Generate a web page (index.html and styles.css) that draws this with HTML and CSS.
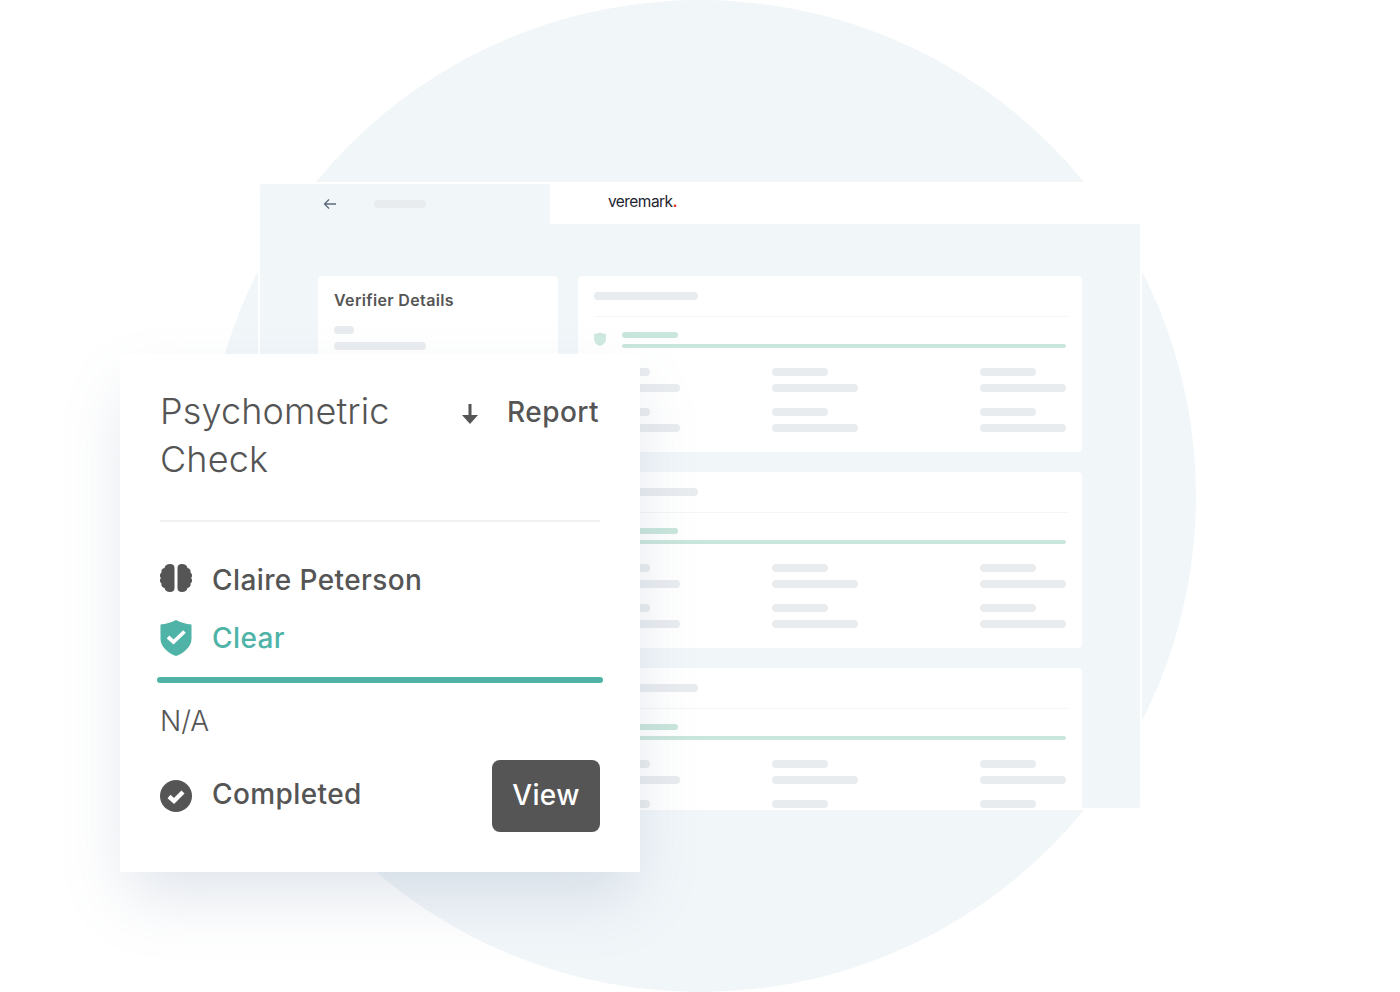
FILE: index.html
```html
<!DOCTYPE html>
<html lang="en">
<head>
  <meta charset="UTF-8" />
  <meta name="viewport" content="width=device-width, initial-scale=1.0" />
  <title>Psychometric Check</title>
  <link rel="stylesheet" href="styles.css">
</head>
<body>
  <div class="stage">
    <div class="circle"></div>

    <div class="dashboard">
      <div class="topbar">
        <div class="topbar-left">
          <svg class="back-arrow" width="14" height="12" viewBox="0 0 14 12" fill="none" stroke="#5b6b7b" stroke-width="1.3">
            <path d="M13 6H1.5M6 1.5L1.5 6L6 10.500" />
          </svg>
          <span class="bar bar-title"></span>
        </div>
        <div class="topbar-right">
          <span class="logo">veremark<span class="logo-dot">.</span></span>
        </div>
      </div>

      <div class="dash-main">
        <div class="side-card">
          <div class="side-title">Verifier Details</div>
          <span class="bar bar-tiny"></span>
          <span class="bar bar-mid"></span>
        </div>

        <div class="check-list">
          <div class="check-card">
            <span class="bar bar-head"></span>
            <div class="check-line"></div>
            <div class="check-status">
              <svg class="mini-shield" width="12" height="14" viewBox="0 0 12 14"><path d="M6 0.500C8 1.500 10 1.800 12 1.800V7C12 10.500 9 13 6 14C3 13 0 10.500 0 7V1.800C2 1.800 4 1.500 6 0.500Z" fill="#cfe9e0" /></svg>
              <div class="status-bars">
                <span class="bar-green bar-green-short"></span>
                <span class="bar-green bar-green-long"></span>
              </div>
            </div>
            <div class="field-grid">
              <div class="field"><span class="bar bar-short"></span><span class="bar bar-long"></span></div>
              <div class="field"><span class="bar bar-short"></span><span class="bar bar-long"></span></div>
              <div class="field"><span class="bar bar-short"></span><span class="bar bar-long"></span></div>
              <div class="field"><span class="bar bar-short"></span><span class="bar bar-long"></span></div>
              <div class="field"><span class="bar bar-short"></span><span class="bar bar-long"></span></div>
              <div class="field"><span class="bar bar-short"></span><span class="bar bar-long"></span></div>
            </div>
          </div>

          <div class="check-card">
            <span class="bar bar-head"></span>
            <div class="check-line"></div>
            <div class="check-status">
              <svg class="mini-shield" width="12" height="14" viewBox="0 0 12 14"><path d="M6 0.500C8 1.500 10 1.800 12 1.800V7C12 10.500 9 13 6 14C3 13 0 10.500 0 7V1.800C2 1.800 4 1.500 6 0.500Z" fill="#cfe9e0" /></svg>
              <div class="status-bars">
                <span class="bar-green bar-green-short"></span>
                <span class="bar-green bar-green-long"></span>
              </div>
            </div>
            <div class="field-grid">
              <div class="field"><span class="bar bar-short"></span><span class="bar bar-long"></span></div>
              <div class="field"><span class="bar bar-short"></span><span class="bar bar-long"></span></div>
              <div class="field"><span class="bar bar-short"></span><span class="bar bar-long"></span></div>
              <div class="field"><span class="bar bar-short"></span><span class="bar bar-long"></span></div>
              <div class="field"><span class="bar bar-short"></span><span class="bar bar-long"></span></div>
              <div class="field"><span class="bar bar-short"></span><span class="bar bar-long"></span></div>
            </div>
          </div>

          <div class="check-card check-card-cut">
            <span class="bar bar-head"></span>
            <div class="check-line"></div>
            <div class="check-status">
              <svg class="mini-shield" width="12" height="14" viewBox="0 0 12 14"><path d="M6 0.500C8 1.500 10 1.800 12 1.800V7C12 10.500 9 13 6 14C3 13 0 10.500 0 7V1.800C2 1.800 4 1.500 6 0.500Z" fill="#cfe9e0" /></svg>
              <div class="status-bars">
                <span class="bar-green bar-green-short"></span>
                <span class="bar-green bar-green-long"></span>
              </div>
            </div>
            <div class="field-grid">
              <div class="field"><span class="bar bar-short"></span><span class="bar bar-long"></span></div>
              <div class="field"><span class="bar bar-short"></span><span class="bar bar-long"></span></div>
              <div class="field"><span class="bar bar-short"></span><span class="bar bar-long"></span></div>
              <div class="field"><span class="bar bar-short"></span></div>
              <div class="field"><span class="bar bar-short"></span></div>
              <div class="field"><span class="bar bar-short"></span></div>
            </div>
          </div>
        </div>
      </div>
    </div>

    <div class="result-card">
      <div class="result-head">
        <h1 class="result-title">Psychometric Check</h1>
        <div class="report-link">
          <svg width="16" height="20" viewBox="0 0 16 20" fill="#555"><path d="M6.500 0H9.500V11H16L8 20L0 11H6.500Z" /></svg>
          <span>Report</span>
        </div>
      </div>

      <div class="result-row row-name">
        <svg class="row-icon" width="32" height="28" viewBox="0 0 32 28" fill="#555">
          <path d="M10 0C13 0 14.500 1.500 14.500 4V24C14.500 26.500 13 28 10 28C7 28 5 26.500 4.500 24C2 23.500 1 21.500 1.500 19.500C-0.500 18 -0.500 15.500 1 14C-0.500 12.500 -0.500 10 1.500 8.500C1 6.500 2 4.500 4.500 4C5 1.500 7 0 10 0Z" />
          <path d="M22 0C19 0 17.500 1.500 17.500 4V24C17.500 26.500 19 28 22 28C25 28 27 26.500 27.500 24C30 23.500 31 21.500 30.500 19.500C32.500 18 32.500 15.500 31 14C32.500 12.500 32.500 10 30.500 8.500C31 6.500 30 4.500 27.500 4C27 1.500 25 0 22 0Z" />
        </svg>
        <span>Claire Peterson</span>
      </div>

      <div class="result-row row-clear">
        <svg class="row-icon" width="32" height="36" viewBox="0 0 32 36">
          <path d="M16 0C21 2.500 26 4 31.500 4.500V19C31.500 27 23 33.500 16 36C9 33.500 0.500 27 0.500 19V4.500C6 4 11 2.500 16 0Z" fill="#4fb3a8" />
          <path d="M8 17L13.500 22L24.500 11.500" fill="none" stroke="#fff" stroke-width="3.800" />
        </svg>
        <span>Clear</span>
      </div>

      <div class="progress"></div>
      <div class="result-na">N/A</div>

      <div class="result-foot">
        <div class="result-row row-done">
          <svg class="row-icon" width="32" height="32" viewBox="0 0 32 32">
            <circle cx="16" cy="16" r="16" fill="#555" />
            <path d="M9 16.500L14 21L23 12" fill="none" stroke="#fff" stroke-width="4.400" />
          </svg>
          <span>Completed</span>
        </div>
        <button class="view-btn">View</button>
      </div>
    </div>
  </div>
</body>
</html>
```

FILE: styles.css
```css
html, body {
  margin: 0;
  padding: 0;
  background: #fff;
}
.stage {
  position: relative;
  width: 1400px;
  height: 992px;
  overflow: hidden;
  font-family: 'Inter', 'Liberation Sans', sans-serif;
  color: #555;
}
.circle {
  position: absolute;
  left: 204px;
  top: 0;
  width: 992px;
  height: 992px;
  border-radius: 50%;
  background: #f1f6f9;
}

/* dashboard behind the card */
.dashboard {
  position: absolute;
  left: 260px;
  top: 184px;
  width: 880px;
  height: 624px;
  background: #f1f6f9;
  box-shadow: 0 0 0 2px #fff;
  border-radius: 2px;
}
.topbar {
  display: flex;
  height: 40px;
}
.topbar-left {
  width: 290px;
  display: flex;
  align-items: center;
  padding-left: 63px;
  box-sizing: border-box;
}
.back-arrow {
  margin-right: 37px;
}
.topbar-right {
  flex: 1;
  background: #fff;
  padding-left: 58px;
  padding-top: 10px;
  box-sizing: border-box;
  margin-top: -2px;
  height: 42px;
}
.logo {
  font-size: 15.500px;
  line-height: 20px;
  color: #1d2430;
  letter-spacing: -0.55px;
  display: block;
}
.logo-dot {
  color: #e5392c;
  font-weight: 700;
}
.dash-main {
  display: flex;
  gap: 20px;
  padding: 52px 58px 0;
}
.side-card {
  width: 240px;
  height: 400px;
  flex: none;
  background: #fff;
  border-radius: 4px;
  padding: 15px 16px 16px;
  box-sizing: border-box;
}
.side-title {
  font-size: 16px;
  font-weight: 600;
  line-height: 18px;
  letter-spacing: 0.35px;
  margin-bottom: 17px;
}
.side-card .bar {
  display: block;
  margin-bottom: 8px;
}
.check-list {
  width: 504px;
  display: flex;
  flex-direction: column;
  gap: 20px;
}
.check-card {
  height: 176px;
  background: #fff;
  border-radius: 4px;
  padding: 16px 16px 0;
  box-sizing: border-box;
  overflow: hidden;
}
.check-card-cut {
  height: 142px;
  border-radius: 4px 4px 0 0;
}
.check-line {
  height: 1px;
  background: #f4f5f6;
  margin: 16px -2px 15px 0;
}
.check-status {
  display: flex;
  gap: 16px;
  align-items: flex-start;
  margin-bottom: 20px;
}
.status-bars {
  flex: 1;
  display: flex;
  flex-direction: column;
  gap: 6px;
}
.mini-shield {
  flex: none;
}
.bar {
  display: block;
  height: 8px;
  border-radius: 4px;
  background: #e9ecef;
}
.bar-title {
  width: 52px;
}
.bar-tiny {
  width: 20px;
}
.bar-mid {
  width: 92px;
}
.bar-head {
  width: 104px;
}
.bar-short {
  width: 56px;
}
.bar-long {
  width: 86px;
}
.bar-green {
  display: block;
  border-radius: 3px;
  background: #c9e6dc;
}
.bar-green-short {
  width: 56px;
  height: 6px;
}
.bar-green-long {
  height: 4px;
}
.field-grid {
  display: grid;
  grid-template-columns: 178px 208px 86px;
  row-gap: 16px;
}
.field {
  display: flex;
  flex-direction: column;
  gap: 8px;
}

/* floating result card */
.result-card {
  position: absolute;
  left: 120px;
  top: 354px;
  width: 520px;
  height: 518px;
  box-sizing: border-box;
  padding: 33px 40px 0;
  background: #fff;
  box-shadow: 0 30px 60px -8px rgba(110, 130, 165, 0.22);
}
.result-head {
  display: flex;
  justify-content: space-between;
  align-items: flex-start;
  height: 133px;
  border-bottom: 2px solid #f0f1f2;
}
.result-title {
  margin: 0;
  width: 250px;
  font-size: 36px;
  line-height: 48px;
  font-weight: 300;
  letter-spacing: 0.13px;
}
.report-link {
  display: flex;
  align-items: center;
  gap: 29px;
  height: 48px;
  margin-top: 1px;
  font-size: 28px;
  font-weight: 500;
  letter-spacing: 0.45px;
  padding-right: 1px;
}
.report-link svg {
  margin-top: 4px;
}
.result-row {
  display: flex;
  align-items: center;
  font-size: 28px;
  font-weight: 500;
  letter-spacing: 0.4px;
}
.row-icon {
  flex: none;
  margin-right: 20px;
}
.row-name {
  height: 36px;
  margin-top: 40px;
}
.row-name .row-icon {
  margin-bottom: 4px;
}
.row-clear {
  height: 36px;
  margin-top: 22px;
  color: #4fb3a8;
}
.progress {
  height: 6px;
  margin: 21px -3px 0;
  border-radius: 3px;
  background: #4fb3a8;
}
.result-na {
  margin-top: 21px;
  font-size: 28px;
  line-height: 34px;
  font-weight: 300;
}
.result-foot {
  display: flex;
  justify-content: space-between;
  align-items: center;
  margin-top: 22px;
  height: 72px;
}
.row-done {
  margin-top: -4px;
}
.row-done .row-icon {
  margin-top: 4px;
}
.view-btn {
  width: 108px;
  height: 72px;
  border: none;
  border-radius: 8px;
  background: #555;
  color: #fff;
  font-family: inherit;
  font-size: 28px;
  font-weight: 500;
  letter-spacing: 0.3px;
  padding: 0 0 2px;
}
```
